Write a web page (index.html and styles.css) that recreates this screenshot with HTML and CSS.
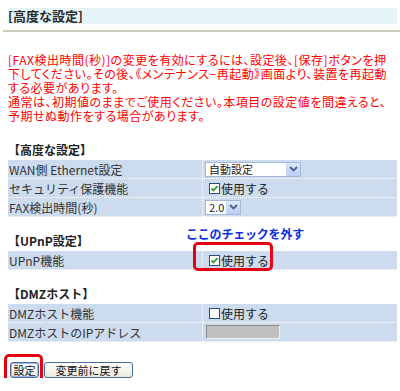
FILE: index.html
```html
<!DOCTYPE html>
<html lang="ja">
<head>
  <meta charset="UTF-8" />
  <title>高度な設定</title>
  <link rel="stylesheet" href="styles.css">
</head>
<body>
  <!-- Title -->
  <div class="page">
    <div class="title-bar">[高度な設定]</div>
  </div>
  <div class="rule"></div>

  <div class="page">
    <div class="notice">
      <div class="notice-line">[FAX検出時間(秒)]の変更を有効にするには、設定後、[保存]ボタンを押</div>
      <div class="notice-line">下してください。その後、《メンテナンス−再起動》画面より、装置を再起動</div>
      <div class="notice-line">する必要があります。</div>
      <div class="notice-line">通常は、初期値のままでご使用ください。本項目の設定値を間違えると、</div>
      <div class="notice-line">予期せぬ動作をする場合があります。</div>
    </div>

    <!-- 高度な設定 -->
    <div class="section first">
      <div class="section-title">【高度な設定】</div>
      <table class="settings">
        <tr>
          <td class="label"><div class="cell">WAN側 Ethernet設定</div></td>
          <td class="value">
            <div class="cell">
              <span class="select wide"><span class="select-text">自動設定</span><span class="arrow"><svg width="9" height="6" viewBox="0 0 9 6"><path d="M1 1l3.5 3.5L8 1" fill="none" stroke="#4d6185" stroke-width="1.8"/></svg></span></span>
            </div>
          </td>
        </tr>
        <tr>
          <td class="label"><div class="cell">セキュリティ保護機能</div></td>
          <td class="value">
            <div class="cell check"><svg width="11" height="11" viewBox="0 0 11 11"><rect x="0.5" y="0.5" width="10" height="10" fill="#fff" stroke="#1c5180"/><path d="M2.5 5.5l2 2 4-4.5" fill="none" stroke="#21a121" stroke-width="1.8"/></svg>使用する</div>
          </td>
        </tr>
        <tr>
          <td class="label"><div class="cell">FAX検出時間(秒)</div></td>
          <td class="value">
            <div class="cell">
              <span class="select narrow"><span class="select-text">2.0</span><span class="arrow"><svg width="9" height="6" viewBox="0 0 9 6"><path d="M1 1l3.5 3.5L8 1" fill="none" stroke="#4d6185" stroke-width="1.8"/></svg></span></span>
            </div>
          </td>
        </tr>
      </table>
    </div>

    <!-- UPnP設定 -->
    <div class="section">
      <div class="section-title">【UPnP設定】</div>
      <table class="settings">
        <tr>
          <td class="label"><div class="cell">UPnP機能</div></td>
          <td class="value">
            <div class="cell check"><svg width="11" height="11" viewBox="0 0 11 11"><rect x="0.5" y="0.5" width="10" height="10" fill="#fff" stroke="#1c5180"/><path d="M2.5 5.5l2 2 4-4.5" fill="none" stroke="#21a121" stroke-width="1.8"/></svg>使用する</div>
          </td>
        </tr>
      </table>
      <div class="hint">ここのチェックを外す</div>
      <div class="mark mark-upnp"></div>
    </div>

    <!-- DMZホスト -->
    <div class="section">
      <div class="section-title">【DMZホスト】</div>
      <table class="settings">
        <tr>
          <td class="label"><div class="cell">DMZホスト機能</div></td>
          <td class="value">
            <div class="cell check"><svg width="11" height="11" viewBox="0 0 11 11"><rect x="0.5" y="0.5" width="10" height="10" fill="#fff" stroke="#1c5180"/></svg>使用する</div>
          </td>
        </tr>
        <tr>
          <td class="label"><div class="cell">DMZホストのIPアドレス</div></td>
          <td class="value"><div class="cell"><span class="ip-box"></span></div></td>
        </tr>
      </table>
    </div>

    <!-- Buttons -->
    <div class="btn-row">
      <button class="btn btn-default">設定</button>
      <button class="btn btn-reset">変更前に戻す</button>
      <div class="mark mark-btn"></div>
    </div>
  </div>
</body>
</html>
```

FILE: styles.css
```css
body {
  margin: 0;
  font-family: "Noto Sans CJK JP", "Noto Sans", sans-serif;
  font-size: 12px;
  color: #222;
  background: #fff;
}

.page {
  padding: 0 3px 0 8px;
}

.title-bar {
  margin-top: 8px;
  height: 16px;
  line-height: 16px;
  background: #e4f4f7;
  font-size: 13px;
  font-weight: bold;
  color: #2a2a2a;
}

.rule {
  margin: 6px 0 0 3px;
  border-top: 2px solid #cdc9bd;
}

.notice {
  margin-top: 21px;
  color: #f00;
  white-space: nowrap;
  font-feature-settings: "palt";
  letter-spacing: 0.5px;
}

.notice-line {
  height: 14px;
  line-height: 14px;
}

.section {
  position: relative;
  margin-top: 16px;
}

.section.first {
  margin-top: 19px;
}

.section-title {
  font-weight: bold;
  height: 16px;
  line-height: 16px;
  margin-bottom: 2px;
  color: #222;
}

.settings {
  width: 100%;
  border-collapse: separate;
  border-spacing: 0;
}

.settings td {
  padding: 0;
  background: #ccdcee;
  border-bottom: 1px dotted #fff;
  white-space: nowrap;
}

.cell {
  display: flex;
  align-items: center;
  height: 18px;
}

.settings .label {
  width: 193px;
  padding-left: 1px;
  border-right: 1px dotted #fff;
  color: #333;
}

.settings .value {
  padding-left: 2px;
}

.select {
  display: flex;
  height: 15px;
  border: 1px solid #a5b9d6;
  background: #fff;
  box-sizing: border-box;
  font-size: 11px;
  line-height: 13px;
}

.select.wide {
  width: 96px;
}

.select.narrow {
  width: 36px;
}

.select-text {
  flex: 1;
  padding-left: 3px;
  color: #222;
}

.arrow {
  width: 13px;
  display: flex;
  align-items: center;
  justify-content: center;
  background: linear-gradient(#dfe8fd, #b9cdf6);
  border-left: 1px solid #c9d6f0;
}

.check {
  gap: 1px;
  padding-left: 4px;
  color: #222;
}

.ip-box {
  display: block;
  width: 74px;
  height: 14px;
  margin-left: 1px;
  background: #c0c0c0;
  border: 1px solid;
  border-color: #8c8c8c #eee #eee #8c8c8c;
  box-sizing: border-box;
}

.hint {
  position: absolute;
  left: 178px;
  top: -7px;
  line-height: 16px;
  font-weight: bold;
  color: #0a2ee0;
  letter-spacing: -0.2px;
}

.mark {
  position: absolute;
  border: 3px solid #e60012;
  border-radius: 5px;
  box-sizing: border-box;
}

.mark-upnp {
  left: 185px;
  top: 9px;
  width: 80px;
  height: 29px;
}

.btn-row {
  position: relative;
  display: flex;
  gap: 5px;
  margin-top: 20px;
  padding-left: 2px;
}

.btn {
  height: 16px;
  padding: 0;
  font-family: "Noto Sans CJK JP", sans-serif;
  font-size: 11px;
  line-height: 14px;
  color: #111;
  border: 1px solid #4a6a9a;
  border-radius: 3px;
  background: linear-gradient(#ffffff, #ece9df);
}

.btn-default {
  width: 29px;
  box-shadow: inset 0 0 0 1px #9bb8ea;
}

.btn-reset {
  width: 89px;
}

.mark-btn {
  left: -4px;
  top: -8px;
  width: 39px;
  height: 32px;
}
```
